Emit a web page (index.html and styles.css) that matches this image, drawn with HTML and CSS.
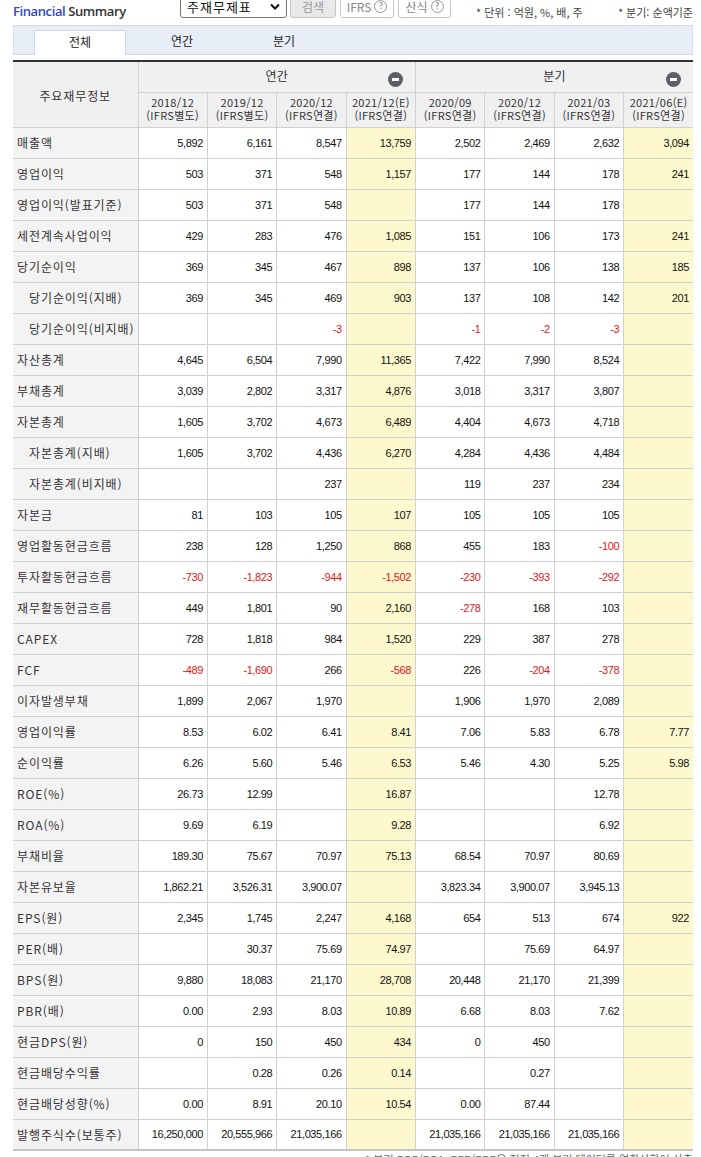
FILE: index.html
```html
<!DOCTYPE html>
<html lang="ko">
<head>
<meta charset="utf-8">
<title>Financial Summary</title>
<link rel="stylesheet" href="styles.css">
</head>
<body>
<div class="wrap">
  <div class="topbar">
    <h2 class="title"><span class="fin">Financial</span> Summary</h2>
    <div class="select">주재무제표<svg class="chev" viewBox="0 0 10 8" width="10" height="8"><path d="M1 1.5 L5 5.5 L9 1.5" fill="none" stroke="#111" stroke-width="2"/></svg></div>
    <div class="btn btn-search">검색</div>
    <div class="btn btn-help">IFRS <span class="q">?</span></div>
    <div class="btn btn-help">산식 <span class="q">?</span></div>
    <div class="notes"><span>* 단위 : 억원, %, 배, 주</span><span>* 분기: 순액기준</span></div>
  </div>
  <div class="tabs">
    <div class="tab active">전체</div>
    <div class="tab">연간</div>
    <div class="tab">분기</div>
  </div>
  <table class="fs">
    <colgroup><col class="c-label"><col><col><col><col><col><col><col><col></colgroup>
    <thead>
      <tr class="h1">
        <th rowspan="2" class="lab">주요재무정보</th>
        <th colspan="4" class="grp">연간<span class="minus"></span></th>
        <th colspan="4" class="grp">분기<span class="minus"></span></th>
      </tr>
      <tr class="h2">
        <th>2018/12<br>(IFRS별도)</th>
        <th>2019/12<br>(IFRS별도)</th>
        <th>2020/12<br>(IFRS연결)</th>
        <th>2021/12(E)<br>(IFRS연결)</th>
        <th>2020/09<br>(IFRS연결)</th>
        <th>2020/12<br>(IFRS연결)</th>
        <th>2021/03<br>(IFRS연결)</th>
        <th>2021/06(E)<br>(IFRS연결)</th>
      </tr>
    </thead>
    <tbody>
      <tr><th>매출액</th><td>5,892</td><td>6,161</td><td>8,547</td><td class="e">13,759</td><td>2,502</td><td>2,469</td><td>2,632</td><td class="e">3,094</td></tr>
      <tr><th>영업이익</th><td>503</td><td>371</td><td>548</td><td class="e">1,157</td><td>177</td><td>144</td><td>178</td><td class="e">241</td></tr>
      <tr><th>영업이익(발표기준)</th><td>503</td><td>371</td><td>548</td><td class="e"></td><td>177</td><td>144</td><td>178</td><td class="e"></td></tr>
      <tr><th>세전계속사업이익</th><td>429</td><td>283</td><td>476</td><td class="e">1,085</td><td>151</td><td>106</td><td>173</td><td class="e">241</td></tr>
      <tr><th>당기순이익</th><td>369</td><td>345</td><td>467</td><td class="e">898</td><td>137</td><td>106</td><td>138</td><td class="e">185</td></tr>
      <tr><th class="sub">당기순이익(지배)</th><td>369</td><td>345</td><td>469</td><td class="e">903</td><td>137</td><td>108</td><td>142</td><td class="e">201</td></tr>
      <tr><th class="sub">당기순이익(비지배)</th><td></td><td></td><td class="neg">-3</td><td class="e"></td><td class="neg">-1</td><td class="neg">-2</td><td class="neg">-3</td><td class="e"></td></tr>
      <tr><th>자산총계</th><td>4,645</td><td>6,504</td><td>7,990</td><td class="e">11,365</td><td>7,422</td><td>7,990</td><td>8,524</td><td class="e"></td></tr>
      <tr><th>부채총계</th><td>3,039</td><td>2,802</td><td>3,317</td><td class="e">4,876</td><td>3,018</td><td>3,317</td><td>3,807</td><td class="e"></td></tr>
      <tr><th>자본총계</th><td>1,605</td><td>3,702</td><td>4,673</td><td class="e">6,489</td><td>4,404</td><td>4,673</td><td>4,718</td><td class="e"></td></tr>
      <tr><th class="sub">자본총계(지배)</th><td>1,605</td><td>3,702</td><td>4,436</td><td class="e">6,270</td><td>4,284</td><td>4,436</td><td>4,484</td><td class="e"></td></tr>
      <tr><th class="sub">자본총계(비지배)</th><td></td><td></td><td>237</td><td class="e"></td><td>119</td><td>237</td><td>234</td><td class="e"></td></tr>
      <tr><th>자본금</th><td>81</td><td>103</td><td>105</td><td class="e">107</td><td>105</td><td>105</td><td>105</td><td class="e"></td></tr>
      <tr><th>영업활동현금흐름</th><td>238</td><td>128</td><td>1,250</td><td class="e">868</td><td>455</td><td>183</td><td class="neg">-100</td><td class="e"></td></tr>
      <tr><th>투자활동현금흐름</th><td class="neg">-730</td><td class="neg">-1,823</td><td class="neg">-944</td><td class="e neg">-1,502</td><td class="neg">-230</td><td class="neg">-393</td><td class="neg">-292</td><td class="e"></td></tr>
      <tr><th>재무활동현금흐름</th><td>449</td><td>1,801</td><td>90</td><td class="e">2,160</td><td class="neg">-278</td><td>168</td><td>103</td><td class="e"></td></tr>
      <tr><th>CAPEX</th><td>728</td><td>1,818</td><td>984</td><td class="e">1,520</td><td>229</td><td>387</td><td>278</td><td class="e"></td></tr>
      <tr><th>FCF</th><td class="neg">-489</td><td class="neg">-1,690</td><td>266</td><td class="e neg">-568</td><td>226</td><td class="neg">-204</td><td class="neg">-378</td><td class="e"></td></tr>
      <tr><th>이자발생부채</th><td>1,899</td><td>2,067</td><td>1,970</td><td class="e"></td><td>1,906</td><td>1,970</td><td>2,089</td><td class="e"></td></tr>
      <tr><th>영업이익률</th><td>8.53</td><td>6.02</td><td>6.41</td><td class="e">8.41</td><td>7.06</td><td>5.83</td><td>6.78</td><td class="e">7.77</td></tr>
      <tr><th>순이익률</th><td>6.26</td><td>5.60</td><td>5.46</td><td class="e">6.53</td><td>5.46</td><td>4.30</td><td>5.25</td><td class="e">5.98</td></tr>
      <tr><th>ROE(%)</th><td>26.73</td><td>12.99</td><td></td><td class="e">16.87</td><td></td><td></td><td>12.78</td><td class="e"></td></tr>
      <tr><th>ROA(%)</th><td>9.69</td><td>6.19</td><td></td><td class="e">9.28</td><td></td><td></td><td>6.92</td><td class="e"></td></tr>
      <tr><th>부채비율</th><td>189.30</td><td>75.67</td><td>70.97</td><td class="e">75.13</td><td>68.54</td><td>70.97</td><td>80.69</td><td class="e"></td></tr>
      <tr><th>자본유보율</th><td>1,862.21</td><td>3,526.31</td><td>3,900.07</td><td class="e"></td><td>3,823.34</td><td>3,900.07</td><td>3,945.13</td><td class="e"></td></tr>
      <tr><th>EPS(원)</th><td>2,345</td><td>1,745</td><td>2,247</td><td class="e">4,168</td><td>654</td><td>513</td><td>674</td><td class="e">922</td></tr>
      <tr><th>PER(배)</th><td></td><td>30.37</td><td>75.69</td><td class="e">74.97</td><td></td><td>75.69</td><td>64.97</td><td class="e"></td></tr>
      <tr><th>BPS(원)</th><td>9,880</td><td>18,083</td><td>21,170</td><td class="e">28,708</td><td>20,448</td><td>21,170</td><td>21,399</td><td class="e"></td></tr>
      <tr><th>PBR(배)</th><td>0.00</td><td>2.93</td><td>8.03</td><td class="e">10.89</td><td>6.68</td><td>8.03</td><td>7.62</td><td class="e"></td></tr>
      <tr><th>현금DPS(원)</th><td>0</td><td>150</td><td>450</td><td class="e">434</td><td>0</td><td>450</td><td></td><td class="e"></td></tr>
      <tr><th>현금배당수익률</th><td></td><td>0.28</td><td>0.26</td><td class="e">0.14</td><td></td><td>0.27</td><td></td><td class="e"></td></tr>
      <tr><th>현금배당성향(%)</th><td>0.00</td><td>8.91</td><td>20.10</td><td class="e">10.54</td><td>0.00</td><td>87.44</td><td></td><td class="e"></td></tr>
      <tr><th>발행주식수(보통주)</th><td>16,250,000</td><td>20,555,966</td><td>21,035,166</td><td class="e"></td><td>21,035,166</td><td>21,035,166</td><td>21,035,166</td><td class="e"></td></tr>
    </tbody>
  </table>
  <p class="foot">* 분기 ROE/ROA, PER/PBR은 직전 4개 분기 데이터를 연환산하여 산출</p>
</div>
</body>
</html>
```
FILE: styles.css
```css
* { box-sizing: border-box; }
html, body { margin: 0; padding: 0; background: #fff; }
body {
  font-family: "Noto Sans CJK KR", "Noto Sans", sans-serif;
  color: #333;
  font-size: 11px;
}
.wrap {
  width: 680px;
  margin-left: 13px;
}
.topbar {
  display: flex;
  align-items: flex-start;
  height: 25px;
}
.title {
  margin: 0;
  width: 167px;
  padding-top: 2px;
  font-family: "Open Sans", "Noto Sans", sans-serif;
  font-size: 13px;
  font-weight: 600;
  letter-spacing: -0.4px;
  color: #333;
  line-height: 18px;
}
.fin { color: #3047c8; }
.select {
  width: 107px;
  height: 23px;
  margin-top: -5px;
  border: 1px solid #777;
  border-radius: 3px;
  background: #fff;
  display: flex;
  align-items: center;
  justify-content: space-between;
  padding: 0 6px 0 6px;
  font-size: 13px;
  color: #111;
  letter-spacing: 1px;
}
.chev { display: block; }
.btn {
  height: 23px;
  margin-top: -5px;
  border: 1px solid #c6c6c6;
  border-radius: 3px;
  display: flex;
  align-items: center;
  justify-content: center;
  font-size: 12px;
  color: #888;
}
.btn-search {
  width: 46px;
  margin-left: 3px;
  background: #e9e9e9;
  color: #9a9a9a;
}
.btn-help {
  width: 54px;
  margin-left: 4px;
  background: #fff;
  gap: 3px;
}
.btn-help + .btn-help { width: 53px; }
.q {
  display: inline-flex;
  align-items: center;
  justify-content: center;
  width: 13px;
  height: 13px;
  border: 1px solid #999;
  border-radius: 50%;
  font-family: "DejaVu Sans", sans-serif;
  font-size: 9px;
  color: #888;
  line-height: 1;
}
.notes {
  flex: 1;
  display: flex;
  justify-content: space-between;
  margin-left: 25px;
  padding-top: 4px;
  font-size: 11px;
  color: #444;
  line-height: 16px;
}
.tabs {
  height: 30px;
  background: #e8eef8;
  border: 1px solid #d3dbea;
  display: flex;
  align-items: flex-end;
  padding-left: 20px;
}
.tab {
  width: 92px;
  height: 25px;
  margin-right: 10px;
  display: flex;
  align-items: center;
  justify-content: center;
  padding-bottom: 4px;
  font-size: 12px;
  color: #222;
  margin-bottom: -1px;
}
.tab.active {
  background: #fff;
  border: 1px solid #cdd6e6;
  border-bottom: none;
  height: 25px;
}
.fs {
  margin-top: 5px;
  width: 680px;
  border-collapse: collapse;
  table-layout: fixed;
  border-top: 2px solid #333;
  border-bottom: 2px solid #c4c4c4;
}
.c-label { width: 125px; }
.fs th, .fs td {
  border: 1px solid #d0d0d0;
  padding: 0;
}
.fs tr > :first-child { border-left: none; }
.fs tr > :last-child { border-right: none; }
.fs thead th {
  background: #f0f0f0;
  font-weight: normal;
  color: #333;
  font-size: 11px;
  text-align: center;
  letter-spacing: 0.3px;
}
.fs thead th.lab { font-size: 12px; letter-spacing: 0.9px; padding-top: 2px; }
.h1 th { height: 31px; }
.h1 th.grp { position: relative; font-size: 12px; padding-bottom: 3px; }
.h2 th { height: 35px; line-height: 13px; color: #444; padding-bottom: 2px; }
.minus {
  position: absolute;
  right: 12px;
  top: 10px;
  width: 15px;
  height: 15px;
  border-radius: 50%;
  background: #5c5f66;
}
.minus::after {
  content: "";
  position: absolute;
  left: 4px;
  right: 4px;
  top: 6px;
  height: 3px;
  background: #fff;
}
.fs tbody th {
  background: #f3f3f3;
  font-weight: normal;
  text-align: left;
  padding-left: 4px;
  font-size: 12px;
  letter-spacing: 0.9px;
  color: #333;
  height: 31px;
  white-space: nowrap;
}
.fs tbody th.sub { padding-left: 16px; }
.fs tbody td {
  text-align: right;
  padding-right: 4px;
  font-family: "Liberation Sans", "DejaVu Sans", sans-serif;
  font-size: 11px;
  letter-spacing: -0.4px;
  color: #111;
  height: 31px;
}
.fs tbody td.e { background: #fdf8cd; }
.fs tbody td.neg { color: #e8141b; }
.foot {
  margin: 1px 0 0;
  text-align: right;
  font-size: 11px;
  color: #666;
  line-height: 14px;
}
```
